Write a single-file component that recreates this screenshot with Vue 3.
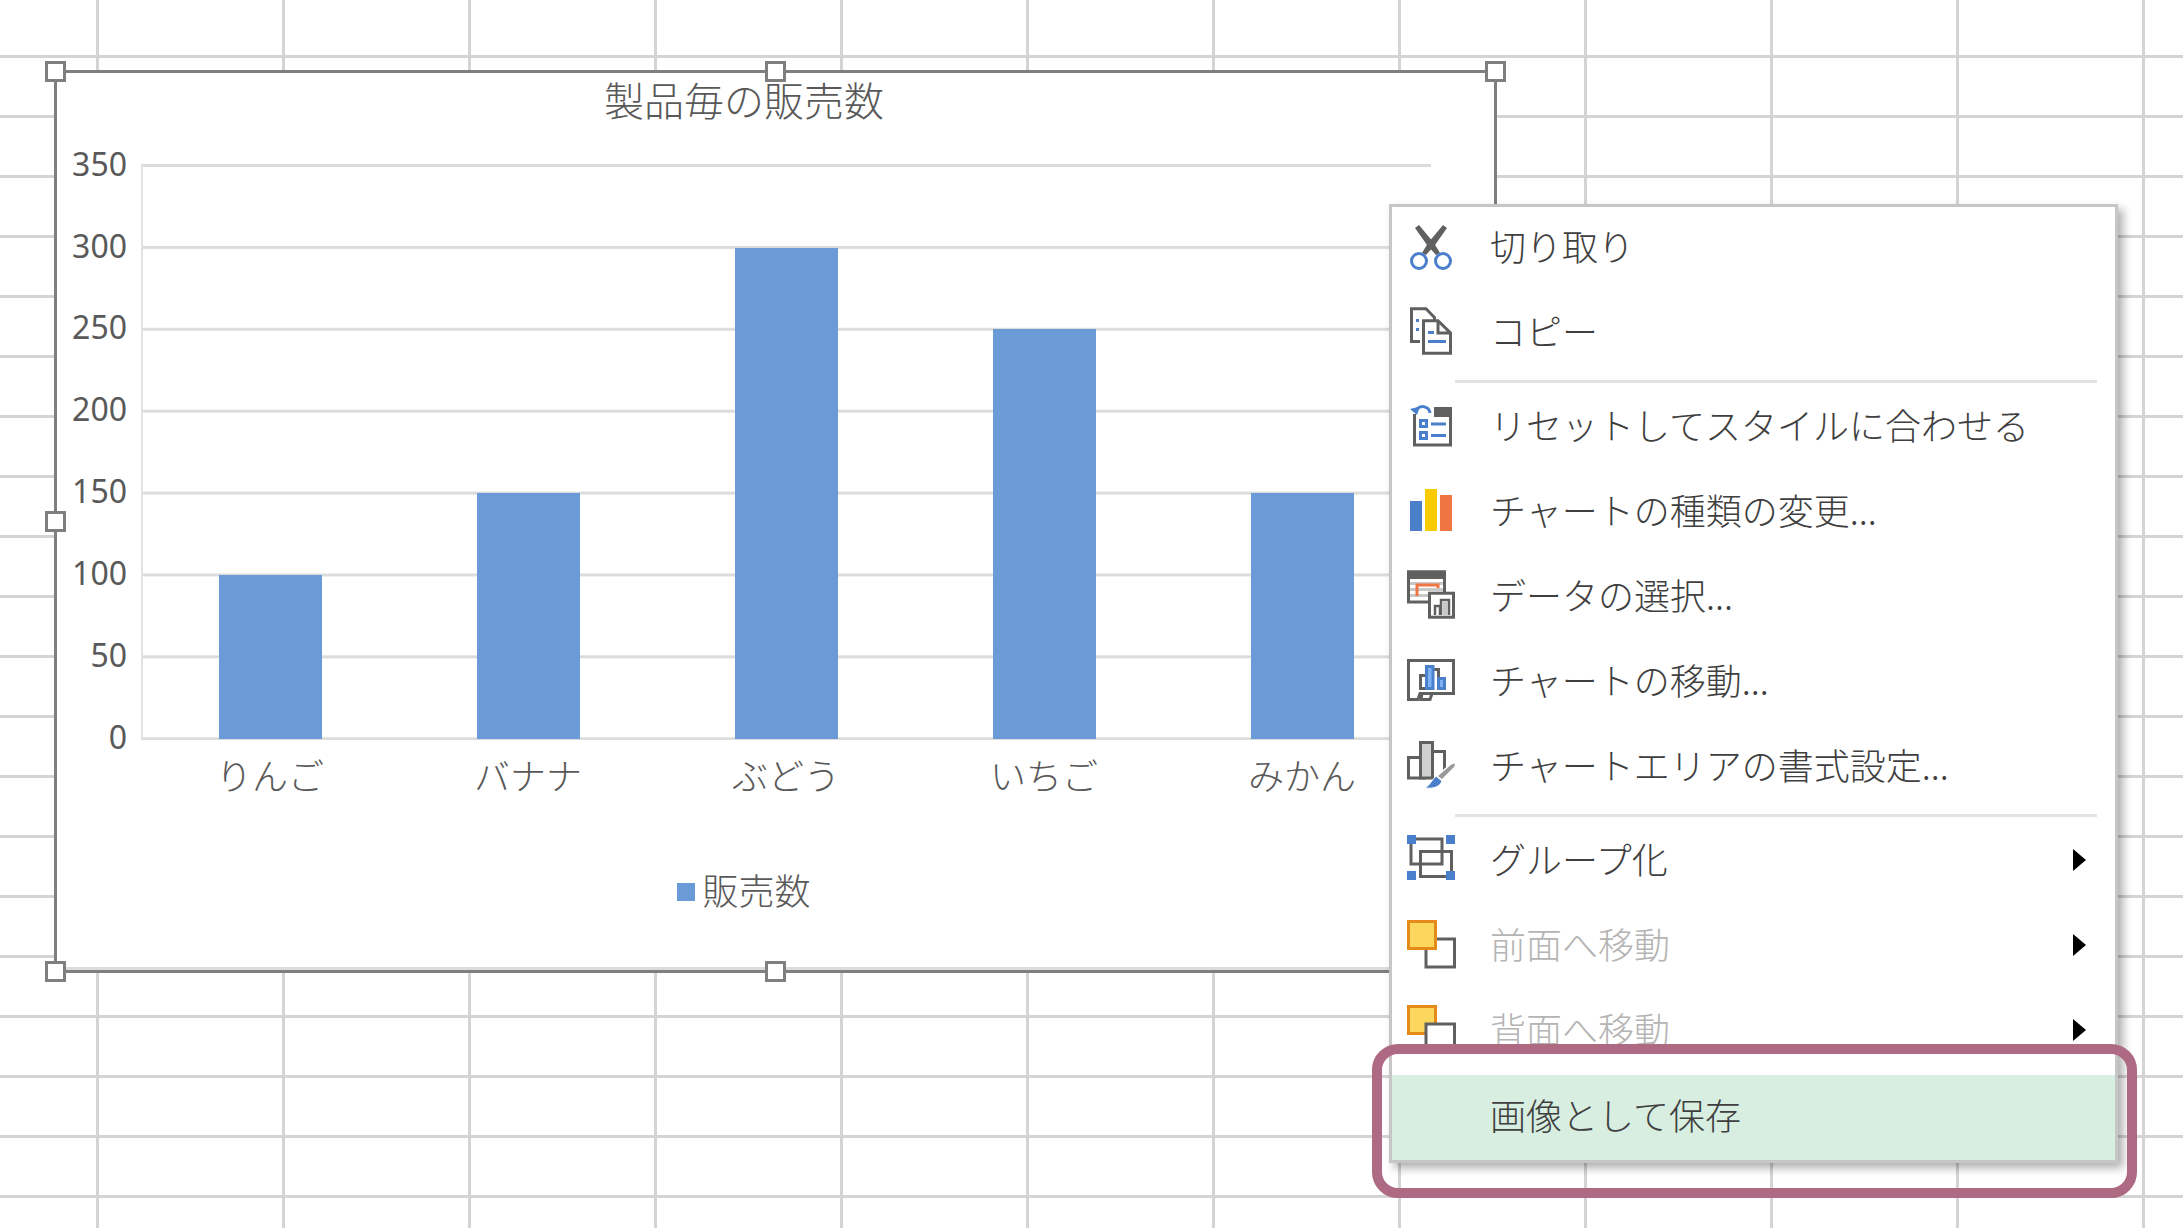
<template>
  <div class="sheet">
    <div class="chart">
      <span v-for="h in handles" :key="h.id" class="handle" :class="h.id"></span>
      <div class="title">製品毎の販売数</div>
      <div class="plot-row">
        <div class="y-axis">
          <div v-for="t in ticks" :key="t" class="tick">{{ t }}</div>
        </div>
        <div class="plot">
          <div v-for="item in sales" :key="item.name" class="slot">
            <div class="bar" :style="{ height: item.value * 1.638 + 'px' }"></div>
          </div>
        </div>
      </div>
      <div class="categories">
        <div v-for="item in sales" :key="item.name" class="category">{{ item.name }}</div>
      </div>
      <div class="legend"><span class="swatch"></span>販売数</div>
    </div>

    <div class="menu">
      <div class="item first">
        <svg class="icon" viewBox="0 0 56 56">
          <path d="M9 8 L13 5 L28 23 L34 33 L30 35 L21 25 Z" fill="#606060" />
          <path d="M41 8 L37 5 L22 23 L16 33 L20 35 L29 25 Z" fill="#606060" />
          <circle cx="13" cy="41" r="7.5" fill="#fff" stroke="#4a7fcb" stroke-width="3" />
          <circle cx="37" cy="41" r="7.5" fill="#fff" stroke="#4a7fcb" stroke-width="3" />
        </svg>
        <span class="label">切り取り</span>
      </div>
      <div class="item">
        <svg class="icon" viewBox="0 0 56 56">
          <path d="M14 37.5 H5.5 V4.8 H20 L28.5 13.5 V16" fill="none" stroke="#606060" stroke-width="3" />
          <rect x="10" y="15" width="3" height="3" fill="#4a7fcb" />
          <rect x="10" y="24" width="3" height="3" fill="#4a7fcb" />
          <path d="M17.5 16.8 H32 L44.5 29 V49.2 H17.5 Z M32 17 V29 H44" fill="#fff" stroke="#606060" stroke-width="3" />
          <rect x="22" y="27" width="6" height="3" fill="#4a7fcb" />
          <rect x="22" y="36" width="18" height="3" fill="#4a7fcb" />
        </svg>
        <span class="label">コピー</span>
      </div>
      <div class="sep"></div>
      <div class="item">
        <svg class="icon" viewBox="0 0 56 56">
          <path d="M8.5 16 V47 H44.5 V12" fill="none" stroke="#606060" stroke-width="3" />
          <rect x="28" y="9" width="18" height="10" fill="#606060" />
          <rect x="14.5" y="22.5" width="6" height="6" fill="#fff" stroke="#4a7fcb" stroke-width="3" />
          <rect x="14.5" y="34.5" width="6" height="6" fill="#fff" stroke="#4a7fcb" stroke-width="3" />
          <rect x="25" y="24.5" width="15" height="3" fill="#4a7fcb" />
          <rect x="25" y="36" width="15" height="3" fill="#4a7fcb" />
          <path d="M24 15 C23 8 15 7 11 11" fill="none" stroke="#fff" stroke-width="6" />
          <path d="M24 15 C23 8 15 7 11 11" fill="none" stroke="#4a7fcb" stroke-width="3" />
          <path d="M4 11 L14 8.5 L11 17 Z" fill="#4a7fcb" />
        </svg>
        <span class="label">リセットしてスタイルに合わせる</span>
      </div>
      <div class="item">
        <svg class="icon" viewBox="0 0 56 56">
          <rect x="4" y="18" width="12" height="30" fill="#4a7fcb" />
          <rect x="19" y="6" width="12" height="42" fill="#f9cb00" />
          <rect x="34" y="12" width="12" height="36" fill="#ef7543" />
        </svg>
        <span class="label">チャートの種類の変更...</span>
      </div>
      <div class="item">
        <svg class="icon" viewBox="0 0 56 56">
          <rect x="2.5" y="4" width="36" height="30" fill="#fff" stroke="#606060" stroke-width="3" />
          <rect x="1" y="2.5" width="39" height="8.5" fill="#606060" />
          <rect x="4" y="14" width="33" height="3" fill="#c8c8c8" />
          <rect x="4" y="20" width="33" height="3" fill="#c8c8c8" />
          <rect x="4" y="26" width="20" height="3" fill="#c8c8c8" />
          <path d="M11 28 V17 H32 V20" fill="none" stroke="#ef7543" stroke-width="3" />
          <rect x="23.5" y="25.2" width="24" height="24" fill="#fff" stroke="#606060" stroke-width="3" />
          <path d="M29 47 V38 H34 V47 M35 47 V32 H43 V47" fill="none" stroke="#606060" stroke-width="2.5" />
          <rect x="37" y="34" width="5" height="13" fill="#c8c8c8" />
        </svg>
        <span class="label">データの選択...</span>
      </div>
      <div class="item">
        <svg class="icon" viewBox="0 0 56 56">
          <path d="M2.5 46.5 V7.5 H47.5 V40.5 H14 L12 46.5 Z" fill="#fff" stroke="#606060" stroke-width="3" />
          <path d="M16 40.5 L15 46.5 H24 L26 40.5" fill="none" stroke="#606060" stroke-width="3" />
          <rect x="14.5" y="22.5" width="6" height="13" fill="#fff" stroke="#606060" stroke-width="3" />
          <path d="M28 16.5 H32.5 V26" fill="none" stroke="#606060" stroke-width="3" />
          <rect x="20.5" y="13.5" width="6.5" height="22" fill="#7db3f5" stroke="#4a7fcb" stroke-width="3" />
          <rect x="32.5" y="25.5" width="6" height="10" fill="#7db3f5" stroke="#4a7fcb" stroke-width="3" />
        </svg>
        <span class="label">チャートの移動...</span>
      </div>
      <div class="item">
        <svg class="icon" viewBox="0 0 56 56">
          <path d="M14 19.5 H2.5 V40 H20" fill="none" stroke="#606060" stroke-width="3" />
          <rect x="14.5" y="4.5" width="12" height="35.5" fill="#d0d0d0" stroke="#606060" stroke-width="3" />
          <path d="M26.5 13.5 H38.5 V33" fill="none" stroke="#606060" stroke-width="3" />
          <path d="M50 24 L49 29 L36 42 L31 38 L45 26 Z" fill="#999" stroke="#fff" stroke-width="1.5" />
          <path d="M30 38 L36 43 C34 49 27 51 19 50 C24 47 25 43 30 38 Z" fill="#4a7fcb" stroke="#fff" stroke-width="1" />
        </svg>
        <span class="label">チャートエリアの書式設定...</span>
      </div>
      <div class="sep"></div>
      <div class="item">
        <svg class="icon" viewBox="0 0 56 56">
          <rect x="5" y="7" width="31" height="25" fill="none" stroke="#606060" stroke-width="3" />
          <rect x="14.5" y="19.5" width="31" height="25" fill="none" stroke="#606060" stroke-width="3" />
          <rect x="1" y="3" width="9" height="9" fill="#4a7fcb" />
          <rect x="40" y="3" width="9" height="9" fill="#4a7fcb" />
          <rect x="1" y="39" width="9" height="9" fill="#4a7fcb" />
          <rect x="40" y="39" width="9" height="9" fill="#4a7fcb" />
        </svg>
        <span class="label">グループ化</span>
        <span class="arrow"></span>
      </div>
      <div class="item">
        <svg class="icon" viewBox="0 0 56 56">
          <rect x="20" y="22" width="28.5" height="28" fill="#fff" stroke="#606060" stroke-width="3" />
          <rect x="2.5" y="4.5" width="27" height="27" fill="#fbd85d" stroke="#e68a1a" stroke-width="3" />
        </svg>
        <span class="label off">前面へ移動</span>
        <span class="arrow"></span>
      </div>
      <div class="item clipped">
        <svg class="icon" viewBox="0 0 56 56">
          <rect x="2.5" y="4.5" width="27" height="27" fill="#fbd85d" stroke="#e68a1a" stroke-width="3" />
          <rect x="20" y="22" width="28.5" height="28" fill="#fff" stroke="#606060" stroke-width="3" />
        </svg>
        <span class="label off">背面へ移動</span>
        <span class="arrow"></span>
      </div>
      <div class="save-wrap">
        <div class="item save">
          <span class="label">画像として保存</span>
        </div>
      </div>
    </div>

    <div class="ring"></div>
  </div>
</template>

<script setup>
const ticks = [350, 300, 250, 200, 150, 100, 50, 0];

const sales = [
  { name: "りんご", value: 100 },
  { name: "バナナ", value: 150 },
  { name: "ぶどう", value: 300 },
  { name: "いちご", value: 250 },
  { name: "みかん", value: 150 },
];

const handles = [
  { id: "tl" },
  { id: "tm" },
  { id: "tr" },
  { id: "ml" },
  { id: "bl" },
  { id: "bm" },
];
</script>

<style>
html,
body {
  margin: 0;
  background: #fff;
}
</style>

<style scoped>
.sheet {
  position: relative;
  width: 2183px;
  height: 1228px;
  overflow: hidden;
  background-color: #fff;
  background-image: linear-gradient(to right, #d4d4d4 3px, transparent 3px),
    linear-gradient(to bottom, #d4d4d4 3px, transparent 3px);
  background-size: 186px 60px;
  background-position: 96px 55px;
  font-family: "Noto Sans CJK JP", "Noto Sans", sans-serif;
}

.chart {
  position: absolute;
  left: 54px;
  top: 70px;
  width: 1442.5px;
  height: 902.5px;
  box-sizing: border-box;
  padding-right: 62.5px;
  border: 3px solid #7f7f7f;
  background: #fff;
  color: #595959;
  box-shadow: inset 0 -3px 0 #dcdcdc;
}
.handle {
  position: absolute;
  width: 21px;
  height: 21px;
  box-sizing: border-box;
  border: 3px solid #7f7f7f;
  background: #fff;
  z-index: 2;
}
.tl { left: -12px; top: -12px; }
.tm { left: 708px; top: -12px; }
.tr { left: 1427.5px; top: -12px; }
.ml { left: -12px; top: 438px; }
.bl { left: -12px; top: 887.5px; }
.bm { left: 708px; top: 887.5px; }

.title {
  height: 52px;
  line-height: 52px;
  font-size: 40px;
  font-weight: 300;
  text-align: center;
}
.plot-row {
  display: flex;
  margin-top: 39.2px;
}
.y-axis {
  width: 70px;
  margin-top: -41.5px;
  margin-bottom: -37.4px;
  margin-right: 14px;
  font-family: "Noto Sans", sans-serif;
  font-size: 32px;
  text-align: right;
}
.tick {
  height: 81.9px;
  line-height: 81.9px;
}
.plot {
  flex: 1;
  height: 576.3px;
  box-sizing: border-box;
  display: flex;
  padding-bottom: 1.5px;
  background-image: linear-gradient(to right, #e2e2e2 3px, transparent 3px),
    linear-gradient(to bottom, #dcdcdc 3px, transparent 3px);
  background-size: 100% 100%, 100% 81.9px;
  background-position: -1px 0, 0 0;
  background-repeat: no-repeat, repeat-y;
}
.slot {
  flex: 1;
  display: flex;
  justify-content: center;
  align-items: flex-end;
}
.bar {
  width: 103px;
  background: #6a9bd6;
}
.categories {
  display: flex;
  margin-top: 13.5px;
  margin-left: 84px;
}
.category {
  flex: 1;
  height: 40px;
  line-height: 40px;
  font-size: 36px;
  font-weight: 300;
  text-align: center;
}
.legend {
  display: flex;
  align-items: center;
  justify-content: center;
  margin-top: 75px;
  height: 40px;
  font-size: 36px;
  font-weight: 300;
}
.swatch {
  width: 18px;
  height: 18px;
  margin-right: 7px;
  margin-top: 6px;
  background: #6a9bd6;
}

.menu {
  position: absolute;
  left: 1389px;
  top: 204px;
  width: 729px;
  box-sizing: border-box;
  border: 3px solid #c6c6c6;
  background: #fff;
  box-shadow: 5px 5px 9px rgba(0, 0, 0, 0.32);
  color: #3f3f3f;
}
.item {
  display: flex;
  align-items: center;
  height: 85px;
}
.first {
  height: 82px;
}
.first .label {
  margin-bottom: 6px;
}
.icon {
  flex: none;
  width: 56px;
  height: 56px;
  margin-left: 14px;
  margin-right: 28px;
}
.label {
  font-size: 36px;
  font-weight: 300;
  white-space: nowrap;
  margin-bottom: 3px;
}
.off {
  color: #b4b4b4;
}
.arrow {
  margin-left: auto;
  margin-right: 29px;
  width: 0;
  height: 0;
  border-left: 13px solid #000;
  border-top: 11px solid transparent;
  border-bottom: 11px solid transparent;
}
.sep {
  height: 3px;
  margin: 6px 18px 0 63px;
  background: #e2e2e2;
}
.clipped {
  margin-bottom: -28px;
}
.save-wrap {
  position: relative;
  padding-top: 31px;
  background: #fff;
}
.save {
  padding-left: 98px;
  background: #d7eee1;
}
.save .label {
  margin-bottom: 8px;
}

.ring {
  position: absolute;
  left: 1372px;
  top: 1044px;
  width: 765px;
  height: 154px;
  box-sizing: border-box;
  border: 10.5px solid #ad6a82;
  border-radius: 26px;
}
</style>
